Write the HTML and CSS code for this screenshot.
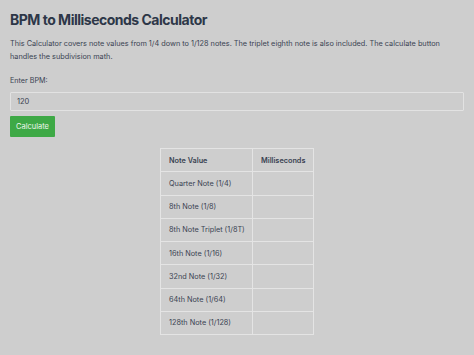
FILE: index.html
```html
<!DOCTYPE html>
<html lang="en">
<head>
    <meta charset="UTF-8">
    <meta name="viewport" content="width=device-width, initial-scale=1.0">
    <title>BPM to Milliseconds Calculator</title>
    <link rel="stylesheet" href="styles.css">
</head>
<body>
    <h1>BPM to Milliseconds Calculator</h1>
    <p class="intro">This Calculator covers note values from 1/4 down to 1/128 notes. The triplet eighth note is also included. The calculate button handles the subdivision math.</p>

    <label for="bpmInput" class="label">Enter BPM:</label>
    <input type="text" id="bpmInput" class="input-box" value="120">
    <button class="calc-btn">Calculate</button>

    <table class="results">
        <thead>
            <tr><th class="col-note">Note Value</th><th class="col-ms">Milliseconds</th></tr>
        </thead>
        <tbody>
            <tr><td>Quarter Note (1/4)</td><td></td></tr>
            <tr><td>8th Note (1/8)</td><td></td></tr>
            <tr><td>8th Note Triplet (1/8T)</td><td></td></tr>
            <tr><td>16th Note (1/16)</td><td></td></tr>
            <tr><td>32nd Note (1/32)</td><td></td></tr>
            <tr><td>64th Note (1/64)</td><td></td></tr>
            <tr><td>128th Note (1/128)</td><td></td></tr>
        </tbody>
    </table>
</body>
</html>
```

FILE: styles.css
```css
body {
    font-family: Inter, "Noto Sans", sans-serif;
    margin: 0;
    padding: 10px;
    background: #cecece;
    color: #2d3748;
    min-height: 100vh;
    box-sizing: border-box;
}
h1 {
    font-size: 14px;
    font-weight: 700;
    letter-spacing: -0.5px;
    margin: 0 0 7px;
    line-height: 20px;
}
.intro {
    font-size: 7.3px;
    line-height: 13px;
    margin: 0 0 13px;
    color: #3a4352;
}
.label {
    display: block;
    font-size: 7.2px;
    line-height: 10px;
    color: #3a4352;
    margin-bottom: 6px;
}
.input-box {
    display: block;
    width: 100%;
    box-sizing: border-box;
    height: 19px;
    padding: 0 6px;
    font-family: inherit;
    font-size: 7.5px;
    color: #3a4352;
    background: #cdcdcd;
    border: 1px solid #e2e2e2;
    border-radius: 1px;
    outline: none;
}
.calc-btn {
    display: block;
    margin-top: 5px;
    height: 21px;
    width: 45px;
    padding: 0;
    font-family: inherit;
    font-size: 7.5px;
    color: #eef7ee;
    background: #3ea946;
    border: none;
    border-radius: 1px;
}
.results {
    margin: 11px auto 0;
    border-collapse: collapse;
    table-layout: fixed;
    width: 153px;
    font-size: 7.3px;
    color: #3a4352;
}
.results th,
.results td {
    border: 1px solid #e4e4e4;
    height: 22.25px;
    padding: 0 0 0 8px;
    text-align: left;
    white-space: nowrap;
}
.results th {
    font-weight: 600;
}
.col-note {
    width: 83px;
}
.col-ms {
    width: 52px;
}
```
